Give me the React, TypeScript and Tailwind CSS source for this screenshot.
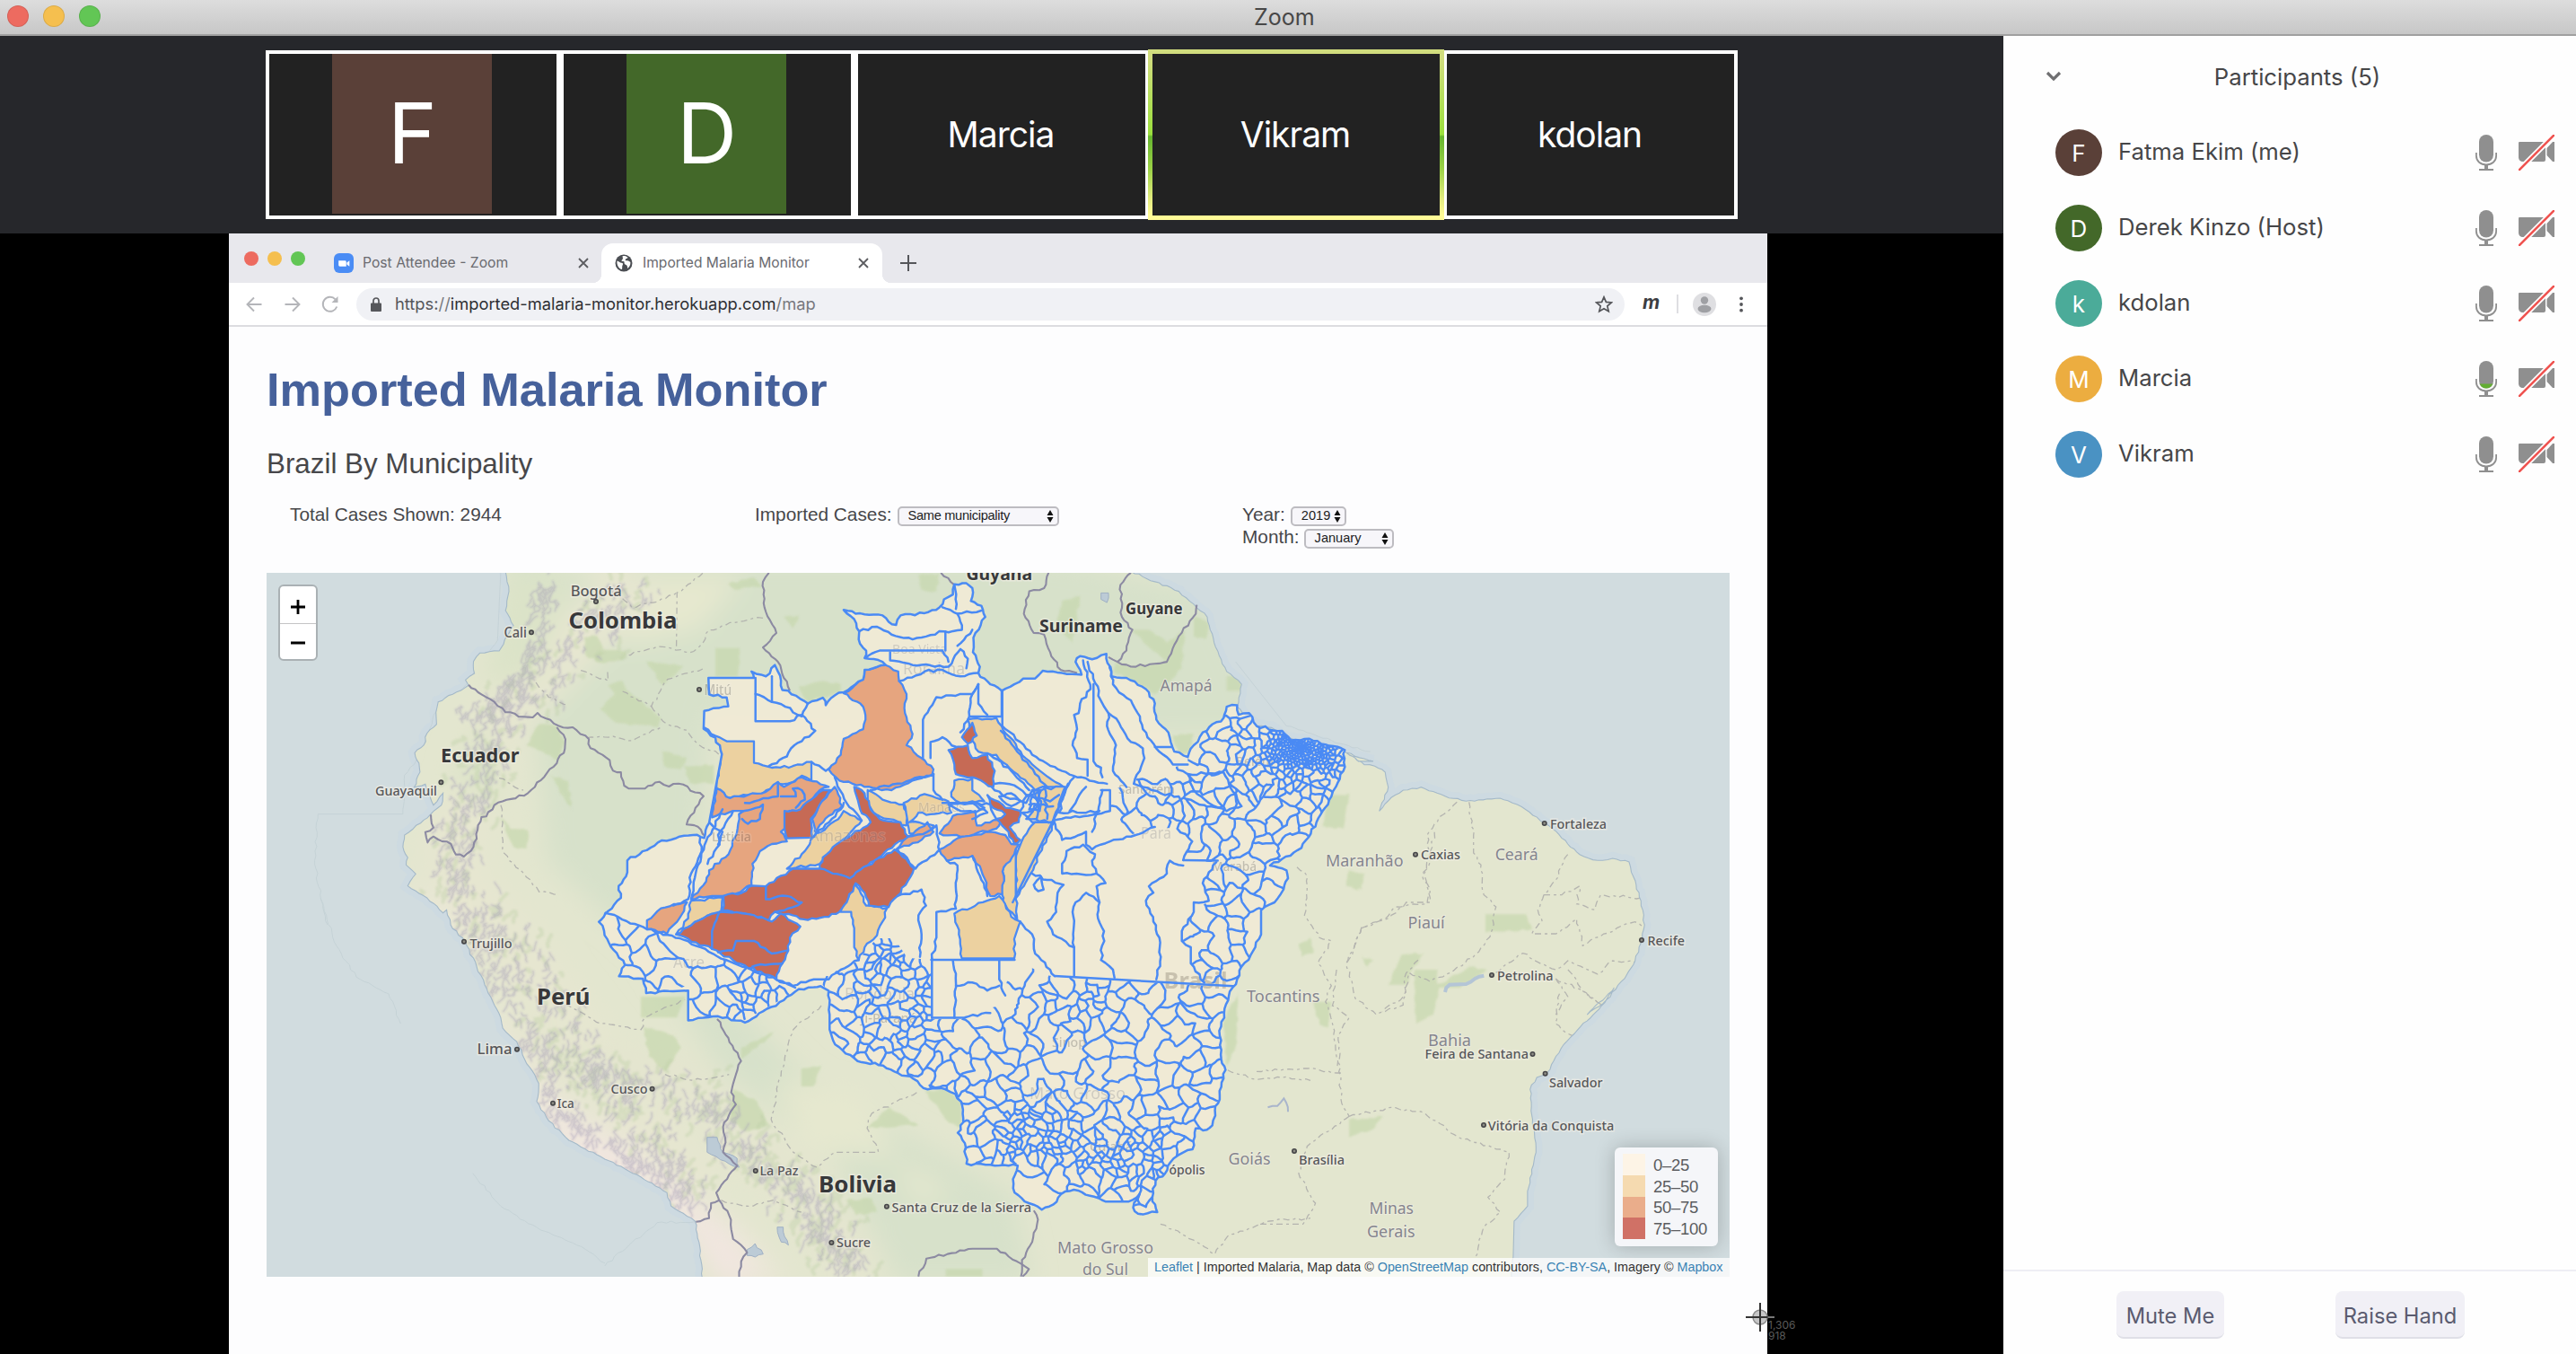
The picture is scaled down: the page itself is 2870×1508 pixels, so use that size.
import React from "react";

type Pt = [number, number];
type Sheet = { ox: number; oy: number; sx: number; sy: number };

/* ---------- map geometry ---------- */

// Survey sheets: every outline is stored in the coordinates of one sheet.
const NW: Sheet = { ox: 290, oy: 630, sx: 1 / 2.8, sy: 1 / 3 };
const AM: Sheet = { ox: 750, oy: 630, sx: 1 / 3, sy: 1 / 2.8 };
const PA: Sheet = { ox: 1100, oy: 630, sx: 1 / 3, sy: 1 / 2.8 };
const NE: Sheet = { ox: 1500, oy: 630, sx: 1 / 3, sy: 1 / 3 };
const SW: Sheet = { ox: 290, oy: 1000, sx: 1 / 2.24, sy: 1 / 3 };
const MT: Sheet = { ox: 900, oy: 1020, sx: 1 / 2.8, sy: 1 / 3 };
const SE: Sheet = { ox: 1400, oy: 1080, sx: 0.9375, sy: 1 / 3 };

const on = (s: Sheet, text: string): Pt[] =>
  text
    .trim()
    .split(/\s+/)
    .map((p) => {
      const [x, y] = p.split(",").map(Number);
      return [s.ox + x * s.sx, s.oy + y * s.sy] as Pt;
    });

function randomFrom(seed: number) {
  let a = seed;
  return () => {
    a = (a + 0x6d2b79f5) | 0;
    let t = Math.imul(a ^ (a >>> 15), 1 | a);
    t = (t + Math.imul(t ^ (t >>> 7), 61 | t)) ^ t;
    return ((t ^ (t >>> 14)) >>> 0) / 4294967296;
  };
}

const hash = (x: number, y: number) => {
  const v = Math.sin(x * 12.9898 + y * 78.233) * 43758.5453;
  return v - Math.floor(v) - 0.5;
};

// Breaks long segments into short ones with a small sideways shift.
function rough(points: Pt[], closed = false, step = 5, amp = 3): Pt[] {
  const src = closed ? [...points, points[0]] : points;
  const out: Pt[] = [src[0]];
  for (let i = 1; i < src.length; i++) {
    const [x0, y0] = src[i - 1];
    const [x1, y1] = src[i];
    const dx = x1 - x0;
    const dy = y1 - y0;
    const len = Math.hypot(dx, dy);
    const straight = Math.abs(dx) < 1 || Math.abs(dy) < 1 || len > 75;
    const n = straight ? 1 : Math.max(1, Math.round(len / step));
    const flip = x0 > x1 || (x0 === x1 && y0 > y1) ? -1 : 1;
    for (let k = 1; k < n; k++) {
      const px = x0 + (dx * k) / n;
      const py = y0 + (dy * k) / n;
      const h = hash(Math.round(px), Math.round(py)) * amp * flip;
      out.push([px - (dy / len) * h, py + (dx / len) * h]);
    }
    out.push([x1, y1]);
  }
  return out;
}

const toPath = (pts: Pt[], closed = false) =>
  "M" + pts.map(([x, y]) => `${x.toFixed(1)} ${y.toFixed(1)}`).join("L") + (closed ? "Z" : "");
const area = (s: Sheet, t: string) => toPath(rough(on(s, t), true), true);
const line = (s: Sheet, t: string) => toPath(rough(on(s, t)));

const coastWest: Pt[] = [
  ...on(NW, "765,20 775,70 765,150 790,200 745,285 685,292 665,320 668,360 640,382 650,400 600,430 555,455 548,490 550,530 520,560 510,600 482,625 495,660 498,690 480,740 515,730 540,800 570,760 565,800 530,832 500,860 450,900 445,940 460,975 455,1000 485,1030 460,1070 520,1110 570,1160"),
  ...on(SW, "465,40 475,90 510,145 540,230 560,290 600,400 605,435 640,480 660,540 695,620 690,680 720,745 770,810 850,865 940,925 1015,985 1025,1030 1085,1080 1095,1150 1103,1270"),
];
const coastEast: Pt[] = [
  ...on(SE, "303,1030 305,960 306,840 322,790 322,740 332,610 328,500 325,400 333,360 345,345 365,250 385,190 410,120 425,60"),
  ...on(NE, "805,1500 870,1450 930,1380 965,1320 985,1260 997,1200 985,1120 960,1040 945,990 890,978 840,985 780,965 740,930 690,880 660,860 600,815 540,785 500,778 400,787 330,770 250,740 190,750 150,775 110,820 140,740 130,690 95,670 60,665 0,625"),
  ...on(PA, "1290,610 1240,610 1195,580 1100,550 1000,540 950,505 900,500 870,480 835,440 850,370 800,330 775,280 745,200 735,160 690,120 640,80 560,50 480,18"),
];
const landPath = toPath(rough([...coastWest, ...coastEast], true, 5, 2), true);

const coveredOutline: Pt[] = [
  ...on(AM, "118,350 270,350 262,330 310,345 340,310 350,330 365,388 385,390 450,430 480,420 500,412 510,435 540,405 570,395 635,355 640,325 710,310 700,300 640,288 645,265 620,230 622,205 612,180 570,138 610,150 700,155 720,175 745,185 760,155 840,148 890,130 905,105 935,90 940,58 980,55 1000,70 995,110 1030,125 1043,160 1010,210 1002,270 1025,315 1020,335 1060,370 1098,390 1140,370 1170,352 1210,352 1235,328 1300,335 1365,340 1345,300 1360,282 1400,292 1448,275"),
  ...on(PA, "415,345 465,350 530,385 560,430 565,480 605,520 625,580 670,597 690,560 720,520 790,475 800,440 835,435 840,465 875,460 900,500 985,515 1015,545 1060,540 1130,558 1195,575 1190,640 1165,690 1150,720 1100,800 1050,880 985,915 945,935 1000,950 1005,975 990,1010 960,1050 915,1075 915,1150 880,1215 850,1250 835,1290"),
  ...on(MT, "1325,240 1300,310 1285,400 1290,480 1303,515 1285,600 1270,650 1262,700 1245,715 1210,710 1200,780 1155,800 1130,825 1115,860 1085,885 1075,940 1090,990 1030,995 1015,975 1035,930 1000,955 930,955 880,935 830,915 790,930 765,965 730,982 690,960 645,925 640,880 655,835 555,832 495,828 490,760 468,725 485,690 478,620 460,595 430,580 360,575 330,545 270,520 235,500 155,485 85,430 68,380 68,330 65,250 40,235"),
  ...on(AM, "470,1315 420,1320 370,1355 300,1390 240,1425 150,1405 100,1410 50,1418 50,1325"),
  ...on(SW, "1030,312 963,318 955,270 895,262 910,225 890,185 870,150 858,110 845,80 862,50"),
  ...on(NW, "1075,1165 1125,1110 1118,1070 1145,1025 1145,985 1240,925 1350,900 1385,910 1400,860 1440,630 1420,575 1383,545 1385,485 1460,470 1455,440 1400,430"),
];
const coveredPath = toPath(rough(coveredOutline, true), true);

const tan = [
  area(AM, "105,505 140,530 180,548 270,548 270,615 330,630 400,625 462,612 462,670 430,655 400,675 350,680 300,710 220,720 190,725 145,695 160,585"),
  area(AM, "650,700 700,730 770,745 785,780 780,810 720,790 670,770 650,730"),
  area(AM, "770,740 840,712 920,735 930,770 860,775 820,770 790,800 870,810 840,840 790,835"),
  area(AM, "60,1045 165,1035 160,1078 100,1100 10,1150 50,1100"),
  area(AM, "610,985 645,1060 715,1068 700,1110 670,1165 640,1190 620,1230 605,1190 605,1130 595,1080 560,1080"),
  area(AM, "570,765 630,795 560,860 490,930 380,945 440,890 460,855 470,845 560,780"),
  area(AM, "985,480 1080,475 1098,500 1150,570 1200,620 1240,650 1305,690 1250,690 1210,700 1150,650 1080,590 1020,580 1000,545"),
  area(AM, "940,670 1000,665 1000,700 1040,735 960,740 930,720"),
  area(AM, "1210,800 1275,800 1195,960 1140,1050 1150,980 1145,920 1165,860"),
  area(AM, "1105,940 1145,880 1145,1040 1150,1105 1100,1050"),
  area(AM, "940,1085 1090,1030 1130,1095 1160,1110 1145,1150 1140,1225 965,1225 955,1150"),
  area(AM, "1200,700 1310,690 1270,800 1180,790 1220,740"),
];
const orange = [
  area(AM, "145,695 190,725 250,715 310,705 350,675 370,690 430,660 465,672 520,690 490,700 460,740 420,765 375,770 372,820 360,830 380,860 330,868 290,890 265,930 262,995 235,1010 200,1030 130,1030 60,1040 110,985 120,950 185,900 215,820 220,775 235,765 200,765 130,785"),
  area(AM, "540,690 565,750 520,780 475,830 465,790 490,740 530,700"),
  area(AM, "570,398 635,355 640,325 710,310 752,330 755,360 780,400 775,460 800,525 780,560 830,600 870,635 865,655 800,670 730,700 680,695 640,690 600,680 555,670 520,635 560,590 570,540 600,525 635,510 643,480 635,440 600,420"),
  area(SW, "965,75 1000,35 1065,15 1040,80 1015,120 965,105"),
  area(AM, "890,885 950,850 1060,830 1110,840 1130,868 1155,870 1140,900 1105,940 1100,1025 1060,1030 1030,950 1000,905 940,912 915,920"),
  area(AM, "935,780 1010,765 1015,810 1100,790 1080,820 960,845 890,835"),
  area(AM, "785,845 850,800 870,830 830,855 745,885"),
];
const red = [
  area(AM, "372,765 425,760 460,730 500,700 525,700 490,745 460,790 465,848 380,850 372,820"),
  area(AM, "605,690 640,710 660,760 690,790 760,800 785,845 740,870 650,935 590,975 490,945 500,910 560,860 660,800 625,760"),
  area(AM, "740,885 770,900 805,945 750,1030 720,1065 655,1060 640,1020 610,990 580,1050 555,1080 520,1095 450,1105 400,1090 340,1080 320,1105 240,1085 165,1075 168,1030 230,1020 265,998 310,1000 400,945 490,945 590,975 650,935"),
  area(AM, "10,1150 100,1100 155,1080 240,1085 330,1110 360,1085 425,1125 390,1160 385,1200 365,1240 345,1290 200,1230 130,1195"),
  area(AM, "1000,490 1015,530 985,555 965,535"),
  area(AM, "920,575 985,560 1000,600 1050,590 1075,640 1070,690 1000,660 945,650 940,620"),
  area(AM, "1050,715 1110,755 1160,765 1155,800 1125,815 1160,855 1140,868 1110,820 1080,790 1110,775 1060,745"),
];

const municipalLines = [
  ...[
    "275,350 275,485 390,485 430,465 475,515 405,560 380,595 320,625",
    "275,400 330,425 375,440 430,470 450,430",
    "330,425 330,345",
    "462,612 510,640 525,630",
    "755,360 840,330 900,325 960,345 1020,335",
    "622,205 680,190 730,215 800,230 905,205 965,200 950,150 900,130",
    "640,290 690,265 900,265 920,300",
    "725,270 725,295 800,310 920,315 960,260 985,290 980,320",
    "910,205 910,265",
    "950,150 1030,140",
    "940,60 945,135",
    "950,250 1000,200",
    "835,600 835,480 880,410 930,405 1000,400 1020,370",
    "990,470 1098,470 1098,390",
    "1020,370 1000,400 990,470 960,520",
    "1020,370 1020,430 1050,465",
    "860,600 860,550 900,535 945,565",
    "540,660 580,740 630,795",
    "660,700 870,650",
    "870,650 870,700 900,730",
    "885,890 810,945 750,885",
    "785,845 850,830 880,810 890,890",
    "915,920 950,935 945,1070 880,1080 880,1160 865,1225",
    "750,1030 830,1010 845,1060 820,1090 830,1150 825,1220",
    "1000,905 1050,1030",
    "350,675 350,720 240,740",
    "360,720 410,720 400,695 430,700 440,730 410,755",
    "235,765 300,745 290,790 250,805 230,790",
    "130,1195 130,1140 155,1080",
    "150,1205 200,1200 210,1170 270,1170 330,1210 380,1200",
    "265,1250 365,1240",
    "310,1000 310,1040 380,1030 430,1050 400,1065 340,1080",
    "90,850 95,890 60,960 50,1040 0,1060",
    "165,760 110,860 75,960 60,1040",
    "200,765 150,840 155,870 115,930",
    "120,800 165,830 150,870",
    "470,845 530,790 560,760 570,740",
    "1065,690 1100,715 1180,740 1200,700",
    "1060,590 1130,640 1190,700",
    "1075,680 1140,685 1180,715",
    "900,740 960,740 1060,745 1080,790",
    "1000,740 1050,770 1000,790",
    "920,745 1000,735 1040,755 1010,770 960,765 920,745",
    "1090,720 1130,710 1160,735 1130,750 1090,720",
    "1160,765 1180,720 1230,700 1210,760 1170,770",
    "1165,770 1200,800 1270,800",
    "1185,715 1260,735 1290,715",
    "1220,700 1215,790",
    "1190,745 1270,750",
    "1240,690 1250,790",
    "1200,720 1230,735 1225,765 1190,760 1200,720",
    "865,1225 865,1410",
    "865,1410 960,1410 1060,1395",
    "935,1232 945,1300 940,1410",
    "1090,1232 1090,1290 1110,1340",
    "945,1310 1000,1300 1050,1325 1090,1310",
  ].map((t) => line(AM, t)),
  ...[
    "355,370 355,610 380,630 385,660",
    "320,295 345,385 310,430 305,460 290,465 300,510 285,560 300,600 335,605 335,655",
    "335,300 360,365 385,430 405,460 400,500 430,560 420,640 465,690",
    "405,460 440,490 480,550 520,570 525,600 490,680",
    "400,280 420,370 440,395 480,420 510,470 520,510 565,570 620,620 670,620",
    "560,566 622,566",
    "50,390 50,500",
    "50,500 110,550 150,590 250,640 300,660 400,680",
    "45,515 100,580 160,650 200,690",
    "270,680 220,795",
    "220,795 85,1050",
    "220,795 410,765 410,700 380,700",
    "290,660 260,700 240,770 375,765",
    "330,690 275,765",
    "220,795 250,855 330,830 330,870 350,885 410,860 480,845 560,815",
    "385,700 350,830",
    "265,890 320,870 360,900 350,920 365,960 330,965 250,960 250,930 265,890",
    "150,960 200,980 255,995 235,1020 230,1080 200,1110 220,1150 290,1190",
    "180,970 188,1010 170,1015 155,995 180,970",
    "290,1280 290,1190 285,1080 295,1050 330,1020 375,1050 370,1100 390,1140 380,1230 420,1260 425,1285",
    "365,960 395,990 365,1000 375,1050",
    "655,935 610,920 600,960 540,1000 555,1020 530,1045 555,1110 575,1160 580,1220 565,1290",
    "110,1110 150,1150 160,1210 210,1260 225,1280",
    "225,1280 835,1312",
    "655,918 770,920",
    "725,1300 680,1240 680,1190 650,1170 650,1140 690,1080 690,1050 740,1045 720,990 765,925",
    "655,918 685,860 635,820 660,780 640,720 580,710 520,690 490,680",
    "670,650 790,645 850,750 800,765 740,740 690,700 670,650",
  ].map((t) => line(PA, t)),
];

/* Small municipalities: Voronoi cells over scattered seats, some joined in pairs,
   bent by a smooth warp and clipped to a region. */

function inside([x, y]: Pt, poly: Pt[]) {
  let hit = false;
  for (let i = 0, j = poly.length - 1; i < poly.length; j = i++) {
    const [xi, yi] = poly[i];
    const [xj, yj] = poly[j];
    if (yi > y !== yj > y && x < ((xj - xi) * (y - yi)) / (yj - yi) + xi) hit = !hit;
  }
  return hit;
}

type Seat = { x: number; y: number; r: number; group: number };
type Corner = { p: Pt; edge: number };

function mesh(region: Pt[], spacing: (x: number, y: number) => number, tries: number, seed: number, core?: [number, number, number, number]) {
  const rnd = randomFrom(seed);
  const xs = region.map((p) => p[0]);
  const ys = region.map((p) => p[1]);
  const [x0, x1, y0, y1] = [Math.min(...xs) - 8, Math.max(...xs) + 8, Math.min(...ys) - 8, Math.max(...ys) + 8];
  const seats: Seat[] = [];
  const place = (x: number, y: number) => {
    if (!inside([x, y], region)) return;
    const r = spacing(x, y) * (0.4 + rnd() * 0.9);
    if (seats.every((s) => Math.hypot(s.x - x, s.y - y) > Math.min(r, s.r))) {
      seats.push({ x, y, r, group: seats.length });
    }
  };
  if (core) {
    const [cx, cy, rx, count] = core;
    for (let i = 0; i < count; i++) {
      place(cx + (rnd() + rnd() - 1) * rx, cy + (rnd() + rnd() - 1) * rx * 0.5);
    }
  }
  for (let i = 0; i < tries; i++) place(x0 + rnd() * (x1 - x0), y0 + rnd() * (y1 - y0));
  for (const s of seats) {
    if (rnd() > 0.45) continue;
    let best = s;
    let dist = 1e9;
    for (const o of seats) {
      const d = Math.hypot(o.x - s.x, o.y - s.y);
      if (o !== s && d < dist) [best, dist] = [o, d];
    }
    if (dist > 6) s.group = best.group;
  }
  const bend = ([x, y]: Pt): Pt => {
    const k = Math.min(1, spacing(x, y) / 18);
    return [
      x + k * (3 * Math.sin(y / 7.3 + x / 17) + 1.7 * Math.sin(y / 2.9 - x / 9)),
      y + k * (3 * Math.sin(x / 7.9 - y / 13) + 1.7 * Math.sin(x / 3.3 + y / 8)),
    ];
  };
  let d = "";
  seats.forEach((s, si) => {
    let cell: Corner[] = [
      { p: [s.x - 80, s.y - 80], edge: -1 },
      { p: [s.x + 80, s.y - 80], edge: -1 },
      { p: [s.x + 80, s.y + 80], edge: -1 },
      { p: [s.x - 80, s.y + 80], edge: -1 },
    ];
    seats.forEach((o, oi) => {
      if (oi === si || Math.abs(o.x - s.x) > 110 || Math.abs(o.y - s.y) > 110) return;
      const nx = o.x - s.x;
      const ny = o.y - s.y;
      const c = (nx * (o.x + s.x) + ny * (o.y + s.y)) / 2;
      const next: Corner[] = [];
      for (let i = 0; i < cell.length; i++) {
        const a = cell[i];
        const b = cell[(i + 1) % cell.length];
        const da = a.p[0] * nx + a.p[1] * ny - c;
        const db = b.p[0] * nx + b.p[1] * ny - c;
        if (da <= 0) next.push(a);
        if (da <= 0 !== db <= 0) {
          const t = da / (da - db);
          const p: Pt = [a.p[0] + (b.p[0] - a.p[0]) * t, a.p[1] + (b.p[1] - a.p[1]) * t];
          next.push({ p, edge: da <= 0 ? oi : a.edge });
        }
      }
      cell = next;
    });
    cell.forEach((a, i) => {
      if (a.edge < si || seats[a.edge].group === s.group) return;
      const b = cell[(i + 1) % cell.length];
      const len = Math.hypot(b.p[0] - a.p[0], b.p[1] - a.p[1]);
      const n = Math.max(1, Math.round(len / 4));
      const pts: Pt[] = [];
      for (let k = 0; k <= n; k++) {
        pts.push(bend([a.p[0] + ((b.p[0] - a.p[0]) * k) / n, a.p[1] + ((b.p[1] - a.p[1]) * k) / n]));
      }
      d += toPath(pts);
    });
  });
  return d;
}

const southRegion: Pt[] = [
  ...on(MT, "215,75 270,75 310,140 385,147 385,345 480,345 500,325 600,300 640,147 755,200 1325,240"),
  ...on(MT, "1300,310 1285,400 1290,480 1303,515 1285,600 1270,650 1262,700 1245,715 1210,710 1200,780 1155,800 1130,825 1115,860 1085,885 1075,940 1090,990 1030,995 1015,975 1035,930 1000,955 930,955 880,935 830,915 790,930 765,965 730,982 690,960 645,925 640,880 655,835 555,832 495,828 490,760 468,725 485,690 478,620 460,595 430,580 360,575 330,545 270,520 235,500 155,485 85,430 68,380 68,330 65,250 20,205 70,200 110,165 150,155"),
];
const eastRegion = on(
  PA,
  "490,680 530,610 560,640 640,625 670,620 670,597 690,560 720,520 790,475 800,440 835,435 840,465 875,460 900,500 985,515 1015,545 1060,540 1130,558 1195,575 1190,640 1165,690 1150,720 1100,800 1050,880 985,915 945,935 1000,950 1005,975 990,1010 960,1050 915,1075 915,1150 880,1215 850,1250 835,1312 725,1300 680,1240 680,1190 650,1170 650,1140 690,1080 740,1045 720,990 765,925 655,918 685,860 635,820 560,815 410,860 410,700",
);
const acreRegion = on(
  SW,
  "862,50 965,105 1068,145 1140,195 1290,275 1335,300 1420,300 1335,310 1300,340 1200,415 1068,410 1068,290 1030,312 963,318 955,270 895,262 910,225 890,185 870,150 858,110 845,80",
);

const southMesh = mesh(
  southRegion,
  (x, y) => {
    const cx = (x - 900) * 2.8;
    const cy = (y - 1020) * 3;
    if (cx < 480) return cy < 460 && cx > 190 && cx < 400 ? 10 : 20;
    if (cy > 640 && cy < 810 && cx > 600 && cx < 860) return 8;
    if (cy > 700 && cy < 880 && cx > 820 && cx < 1120) return 9;
    if (cy > 800 && cx < 920) return 40;
    if (cy > 640) return 18;
    if (cy < 370 && cx > 740 && cx < 960) return 14;
    return 28;
  },
  7000,
  11,
);
const eastMesh = mesh(
  eastRegion,
  (x, y) => {
    const d = Math.hypot(x - 1450, (y - 834) * 1.7);
    return d < 32 ? 4.5 : Math.min(26, 5 + (d - 32) * 0.2);
  },
  7000,
  5,
  [1450, 834, 45, 1500],
);
const acreMesh = mesh(acreRegion, (x) => (x > 820 ? 10 : 29), 1500, 3);

/* ---------- terrain ---------- */

const ridge: Pt[] = [
  ...on(NW, "1180,25 1080,150 960,280 860,390 790,460 730,540 700,650 670,760 620,860 600,960 640,1080 700,1180"),
  ...on(SW, "620,130 680,260 760,400 830,520 900,640 960,760 1020,880 1100,980"),
];
const ridge2: Pt[] = on(NW, "900,30 890,130 860,260 800,380 730,480 640,500");
const ridge3: Pt[] = [...on(SW, "660,420 760,560 960,600 1120,670 1200,820 1300,930 1380,1000"), ...on(MT, "20,1000 100,1100 180,1200")];
const ridge4: Pt[] = on(SW, "500,60 560,200 620,350 700,560 760,720 880,830 1000,920 1060,1010");

function hills(path: Pt[], spread: number, count: number, seed: number) {
  const rnd = randomFrom(seed);
  let d = "";
  for (let i = 0; i < count; i++) {
    const k = rnd() * (path.length - 1);
    const j = Math.floor(k);
    const f = k - j;
    const a = path[j];
    const b = path[j + 1];
    const x = a[0] + (b[0] - a[0]) * f + (rnd() + rnd() - 1) * spread;
    const y = a[1] + (b[1] - a[1]) * f + (rnd() + rnd() - 1) * spread;
    d += `M${x.toFixed(1)} ${y.toFixed(1)}l${(rnd() * 8 - 5).toFixed(1)} ${(rnd() * 5).toFixed(1)}l${(rnd() * 8 - 4).toFixed(1)} ${(rnd() * 6).toFixed(1)}l${(rnd() * 8 - 5).toFixed(1)} ${(rnd() * 5).toFixed(1)}`;
  }
  return d;
}
const hillPaths = [hills(ridge, 32, 560, 1), hills(ridge2, 18, 130, 2), hills(ridge3, 30, 320, 8), hills(ridge4, 20, 240, 9)];
const greenPaths = [hills(ridge, 44, 220, 21), hills(ridge3, 44, 180, 22)];

const parks = [
  area(NW, "1010,240 1050,235 1070,280 1140,290 1130,315 1060,325 1015,300"),
  area(NW, "1205,320 1320,335 1255,400"),
  area(NW, "1420,275 1495,275 1490,370 1420,370"),
  area(NW, "1060,480 1110,420 1150,420 1250,510 1240,540 1110,525"),
  area(NW, "1085,400 1130,385 1155,430 1110,440"),
  area(NW, "870,530 930,540 950,590 930,650 880,620 830,600"),
  area(NW, "905,700 960,720 975,820 945,770"),
  area(NW, "1255,620 1330,640 1310,680 1260,670"),
  area(NW, "1320,670 1415,665 1415,730 1340,725"),
  area(NW, "1460,60 1540,40 1568,70 1480,80"),
  area(NW, "750,840 780,880 835,885 830,945 790,940"),
  area(AM, "370,160 420,155 400,195"),
  area(AM, "420,375 500,360 560,370 560,395 450,425"),
  area(AM, "820,30 890,25 880,80 830,75"),
  area(PA, "250,110 310,95 285,240 230,190"),
  area(PA, "480,200 540,200 600,240 660,200 650,320 560,400 420,330 430,300 480,315 570,305 600,300"),
  area(PA, "690,160 740,180 730,230 690,220"),
  area(PA, "800,345 850,345 850,390 800,390"),
  area(PA, "620,530 690,525 680,580 640,585"),
  area(PA, "1140,720 1210,710 1190,820 1120,810"),
  area(PA, "840,1330 830,1500 800,1560 790,1420"),
  area(PA, "1090,1360 1150,1360 1140,1440 1110,1430"),
  area(PA, "1040,1180 1080,1160 1090,1210 1050,1220"),
  area(PA, "1210,950 1260,960 1250,1010 1200,990"),
  area(NE, "465,1165 600,1165 620,1215 465,1225"),
  area(NE, "185,1300 260,1295 220,1350 200,1400 140,1400"),
  area(NE, "410,1340 470,1350 380,1410 310,1410 290,1500 230,1500 230,1410 320,1395"),
  area(NE, "50,1305 90,1320 70,1340"),
  area(NE, "0,1050 40,1050 40,1085 0,1070"),
  area(SE, "110,500 150,490 140,530 110,560"),
  area(SE, "188,0 215,0 210,150 190,180"),
  area(SW, "950,330 1060,330 1040,400 950,400"),
  area(SW, "955,430 1030,460 1050,500 1010,580 970,530"),
  area(SW, "1200,500 1290,440 1240,500 1200,540"),
  area(SW, "1180,640 1240,680 1270,760 1210,780 1170,740"),
  area(SW, "1350,570 1400,560 1380,630 1350,630"),
  area(MT, "255,640 345,700 185,710"),
  area(MT, "365,585 430,580 480,620 480,710 430,680"),
  area(MT, "430,1180 545,1180 545,1205 430,1205"),
  area(MT, "120,950 200,945 215,990 150,1000"),
];

const countryBorders = [
  line(NW, "650,398 690,430 730,455 765,490 820,505 850,507 865,492 890,510 930,535 975,540 1025,580 1030,610 1090,650 1100,685 1125,690 1135,735 1150,745 1200,745 1245,722 1275,738 1305,728 1383,770 1330,865 1365,872 1390,905"),
  line(NW, "925,540 952,580 950,612 925,660 835,760 730,800 705,838 690,840 665,940 635,972 610,965 595,930 555,915 540,905 522,925 515,890 540,875 532,832"),
  line(AM, "320,22 300,50 305,130 345,210 300,255 350,300 370,350 390,390"),
  line(AM, "895,22 940,60"),
  line(PA, "205,22 190,70 140,80 122,150 155,210 190,215 210,270 245,325 300,335"),
  line(PA, "480,22 445,60 450,160 485,200 465,265 435,300 480,315 575,305 600,300 640,220 697,150 700,122"),
  line(PA, "435,300 405,285"),
  line(SW, "1140,405 1200,545 1187,590 1175,650 1187,690 1155,765 1160,800 1155,850 1190,895 1170,925 1138,985 1145,1010 1125,1020 1120,1070 1087,1082"),
  line(SW, "1145,1010 1170,1060 1180,1140 1215,1185 1200,1215 1195,1266"),
  line(MT, "345,1205 370,1145 515,1112 590,1112 665,1162 690,1180 670,1205"),
  line(MT, "705,985 718,1015 700,1090 668,1150 665,1205"),
];

const stateBorders = [
  line(NW, "1380,25 1300,90 1298,270"),
  line(NW, "1130,110 1160,140 1240,120 1300,90"),
  line(NW, "1568,175 1480,190 1400,215 1370,270 1340,290 1240,270 1140,300"),
  line(NW, "860,390 900,440 960,465"),
  line(NW, "1000,350 1085,385 1083,350"),
  line(NW, "1130,420 1220,470 1270,380 1380,345"),
  line(NW, "1220,470 1270,530 1330,550 1370,600 1430,630"),
  line(NW, "1020,575 1100,570 1160,585 1250,540"),
  line(NW, "745,710 820,750"),
  line(NW, "750,800 760,960 830,1040 870,1090 930,1100"),
  line(NE, "370,790 310,840 270,900 280,980 255,1040 280,1090 270,1130 165,1140 130,1180 50,1210 20,1300 0,1330"),
  line(NE, "410,790 425,900 425,960 450,1000 460,1100 500,1140 480,1240 430,1300 350,1360 280,1390 210,1360 190,1440 120,1490"),
  line(NE, "740,965 700,1050 660,1100 640,1150 655,1190 620,1230 700,1230 770,1180 790,1270 860,1230 965,1190 990,1205"),
  line(NE, "660,1100 720,1100 780,1070 770,1130 830,1150 850,1100 985,1110"),
  line(NE, "500,1360 590,1295 650,1330 700,1350 740,1320 840,1365 890,1320 965,1325"),
  line(NE, "700,1380 740,1440 700,1500"),
  line(NE, "700,1380 790,1420 850,1465"),
  line(PA, "1035,940 1070,970 1060,1090 1110,1160 1150,1170 1105,1240 1150,1310 1130,1360 1160,1450 1170,1560"),
  line(PA, "1250,1130 1340,1100 1400,1050 1480,1050 1460,960 1500,820"),
  line(PA, "1250,1130 1200,1240 1230,1350 1300,1400 1390,1370 1400,1270 1440,1230"),
  line(SE, "95,0 90,120 110,160 97,220 100,430 110,490"),
  line(SE, "110,490 160,460 200,480 240,560 300,610 295,700 275,760 290,810 270,860 260,960"),
  line(SE, "0,340 60,330 100,345"),
  line(SE, "110,490 60,590 50,680 70,780 55,850 0,850"),
  line(SE, "370,0 385,60 410,120"),
  line(SE, "360,80 355,180 375,220"),
  line(MT, "1310,515 1390,545 1480,540 1568,550"),
  line(MT, "1100,1030 1180,1070 1270,1130 1310,1070 1440,1020 1568,1010"),
  line(MT, "340,590 200,660 185,710 220,790 85,790 30,840"),
  line(SW, "1400,360 1330,440 1300,580 1275,740 1330,850 1390,900"),
  line(SW, "730,330 850,420 950,440 960,400 1060,340"),
  line(SW, "1010,590 1080,610 1170,590"),
  line(SW, "1150,1010 1220,1030 1280,1010 1350,1050"),
];

const seaLines = [
  line(NW, "750,23 740,250 640,400 540,500 500,640 450,700 445,830 180,830"),
  line(NW, "180,830 170,1000 210,1200"),
  line(SW, "150,0 190,160 240,265 320,320 350,420"),
  line(SW, "530,920 600,1030 700,1110 790,1160 860,1220"),
  line(SW, "860,1230 920,1160 990,1085 1085,1082"),
  line(PA, "830,300 1000,500 1150,545 1280,580"),
];

const lakes = [
  area(SW, "1115,800 1140,800 1155,850 1190,870 1195,900 1160,880 1115,850"),
  area(SW, "1215,1175 1235,1155 1255,1190 1235,1200 1215,1195"),
  area(SW, "1290,1100 1305,1100 1318,1160 1300,1150"),
  area(PA, "380,85 405,85 400,115 380,105"),
];

type Label = { t: string; x: number; y: number; w: number; s: number; kind: "country" | "state" | "city" | "big"; dot?: Pt };
const labels: Label[] = [
  { t: "Bogotá", x: 635.7, y: 664, w: 57, s: 16.5, kind: "city", dot: [664, 670] },
  { t: "Colombia", x: 633.5, y: 700, w: 121, s: 25, kind: "country" },
  { t: "Cali", x: 561.5, y: 710, w: 25.5, s: 15.5, kind: "city", dot: [592, 704.3] },
  { t: "Ecuador", x: 491, y: 849, w: 87.5, s: 22, kind: "country" },
  { t: "Guayaquil", x: 418, y: 886, w: 69, s: 15, kind: "city", dot: [491.4, 871.3] },
  { t: "Guyana", x: 1076.5, y: 646, w: 73.5, s: 19, kind: "country" },
  { t: "Suriname", x: 1158, y: 703.5, w: 93, s: 19.5, kind: "country" },
  { t: "Guyane", x: 1254, y: 683.5, w: 63.5, s: 17.5, kind: "country" },
  { t: "Amapá", x: 1292.5, y: 770, w: 58, s: 18.5, kind: "state" },
  { t: "Perú", x: 598, y: 1119, w: 59.5, s: 25, kind: "country" },
  { t: "Trujillo", x: 523.5, y: 1055.5, w: 47, s: 15, kind: "city", dot: [517, 1048.7] },
  { t: "Lima", x: 531.5, y: 1173.5, w: 39, s: 17, kind: "city", dot: [576, 1168.7] },
  { t: "Cusco", x: 680.5, y: 1217.5, w: 41, s: 15, kind: "city", dot: [726.6, 1212.7] },
  { t: "Ica", x: 620.8, y: 1233.5, w: 19, s: 15, kind: "city", dot: [616, 1228.7] },
  { t: "La Paz", x: 846.5, y: 1309, w: 43, s: 15, kind: "city", dot: [841.8, 1304] },
  { t: "Bolivia", x: 912, y: 1328, w: 87, s: 25, kind: "country" },
  { t: "Santa Cruz de la Sierra", x: 993.6, y: 1349.5, w: 155.5, s: 15, kind: "city", dot: [987.9, 1343.7] },
  { t: "Sucre", x: 932, y: 1388.5, w: 38, s: 15, kind: "city", dot: [926.4, 1384] },
  { t: "Mato Grosso", x: 1178, y: 1396, w: 107, s: 18, kind: "state" },
  { t: "do Sul", x: 1206, y: 1420, w: 51, s: 18, kind: "state" },
  { t: "Goiás", x: 1368.5, y: 1296.5, w: 47, s: 18, kind: "state" },
  { t: "Brasília", x: 1447, y: 1297, w: 51, s: 15, kind: "city", dot: [1442, 1282] },
  { t: "ópolis", x: 1302.5, y: 1308, w: 40, s: 15, kind: "city" },
  { t: "Tocantins", x: 1389, y: 1116, w: 81.5, s: 18, kind: "state" },
  { t: "Maranhão", x: 1477, y: 965, w: 86.5, s: 18, kind: "state" },
  { t: "Caxias", x: 1583, y: 956.7, w: 44, s: 14.5, kind: "city", dot: [1577, 951.7] },
  { t: "Ceará", x: 1665.7, y: 957.7, w: 48, s: 18, kind: "state" },
  { t: "Fortaleza", x: 1727, y: 922.7, w: 63, s: 14.5, kind: "city", dot: [1720.7, 917] },
  { t: "Piauí", x: 1568.5, y: 1034, w: 41, s: 18, kind: "state" },
  { t: "Recife", x: 1835.5, y: 1052.6, w: 41.5, s: 14.5, kind: "city", dot: [1829, 1047] },
  { t: "Petrolina", x: 1668, y: 1092, w: 62.5, s: 14.5, kind: "city", dot: [1662, 1086] },
  { t: "Bahia", x: 1591, y: 1164.5, w: 48, s: 18, kind: "state" },
  { t: "Feira de Santana", x: 1587.5, y: 1179, w: 115.5, s: 14.5, kind: "city", dot: [1707.5, 1174] },
  { t: "Salvador", x: 1726, y: 1210.7, w: 59.5, s: 14.5, kind: "city", dot: [1721.6, 1195.7] },
  { t: "Vitória da Conquista", x: 1657.8, y: 1258.7, w: 140.5, s: 14.5, kind: "city", dot: [1653, 1253] },
  { t: "Minas", x: 1525.5, y: 1352.3, w: 49.5, s: 18, kind: "state" },
  { t: "Gerais", x: 1523, y: 1377.7, w: 53.5, s: 18, kind: "state" },
];
const fadedLabels: Label[] = [
  { t: "Mitú", x: 784.6, y: 774, w: 30.5, s: 15.5, kind: "city" },
  { t: "Leticia", x: 793, y: 937, w: 44, s: 14.5, kind: "city" },
  { t: "Boa Vista", x: 994, y: 728, w: 61, s: 15, kind: "state" },
  { t: "Roraima", x: 1006, y: 751, w: 69, s: 18, kind: "state" },
  { t: "Manaus", x: 1023, y: 904, w: 52, s: 15, kind: "state" },
  { t: "Amazonas", x: 901.5, y: 937, w: 85, s: 18, kind: "state" },
  { t: "Santarém", x: 1246, y: 884, w: 63, s: 14.5, kind: "city" },
  { t: "Pará", x: 1271, y: 933.5, w: 34, s: 18, kind: "state" },
  { t: "Marabá", x: 1350, y: 970, w: 50, s: 14.5, kind: "city" },
  { t: "Belém", x: 1377, y: 853, w: 42, s: 14.5, kind: "city" },
  { t: "Brasil", x: 1296.5, y: 1101, w: 71, s: 25, kind: "big" },
  { t: "Acre", x: 750, y: 1078, w: 35, s: 18, kind: "state" },
  { t: "Rondônia", x: 941, y: 1113, w: 78, s: 18, kind: "state" },
  { t: "Ji-Paraná", x: 959, y: 1139, w: 62, s: 14.5, kind: "city" },
  { t: "Sinop", x: 1172, y: 1166, w: 38, s: 14.5, kind: "city" },
  { t: "Mato Grosso", x: 1147, y: 1224, w: 107, s: 18, kind: "state" },
  { t: "Cuiabá", x: 1214, y: 1282, w: 48, s: 14.5, kind: "city" },
];

const labelLook = {
  country: "fill-[#37383a] font-bold [stroke-width:3px]",
  big: "fill-[#6d6455] font-bold [stroke-width:0px]",
  state: "fill-[#85858e] font-normal [stroke-width:2px]",
  city: "fill-[#57575a] font-medium [stroke-width:3px]",
};

function MapLabel({ l }: { l: Label }) {
  return (
    <g>
      <text
        x={l.x}
        y={l.y}
        textLength={l.w}
        lengthAdjust="spacingAndGlyphs"
        fontSize={l.s}
        className={`${labelLook[l.kind]} stroke-[#f2efe6]/60 [paint-order:stroke]`}
      >
        {l.t}
      </text>
      {l.dot && <circle cx={l.dot[0]} cy={l.dot[1]} r={2.2} fill="#8d8d85" stroke="#454548" strokeWidth={1.6} />}
    </g>
  );
}

function MapDrawing() {
  return (
    <svg viewBox="297 638 1630 784" className="block h-full w-full font-['Noto_Sans',sans-serif]" aria-hidden="true">
      <defs>
        <clipPath id="land"><path d={landPath} /></clipPath>
        <clipPath id="covered"><path d={coveredPath} /></clipPath>
        <clipPath id="south"><path d={toPath(southRegion, true)} /></clipPath>
        <clipPath id="east"><path d={toPath(eastRegion, true)} /></clipPath>
        <clipPath id="acre"><path d={toPath(acreRegion, true)} /></clipPath>
        <filter id="haze" x="-30%" y="-30%" width="160%" height="160%"><feGaussianBlur stdDeviation="14" /></filter>
        <filter id="relief" x="-30%" y="-30%" width="160%" height="160%"><feGaussianBlur stdDeviation="1.1" /></filter>
      </defs>
      <rect x="297" y="638" width="1630" height="784" fill="#d1dcdf" />
      <path d={landPath} fill="none" stroke="#cad9e2" strokeWidth="14" opacity="0.6" />
      <g fill="none" stroke="#c2d0d4" strokeWidth="1" opacity="0.8">
        {seaLines.map((d, i) => <path key={i} d={d} />)}
      </g>
      <path d={landPath} fill="#e3e6cf" />
      <g clipPath="url(#land)">
        <g filter="url(#haze)">
          <path d="M560 600L800 700 780 950 830 1130 900 1200 1130 1330 1150 1430 1000 1430 930 1290 800 1190 720 1060 610 960 600 840Z" fill="#d7e1ca" />
          <path d="M700 620L1180 620 1350 660 1420 820 1300 820 800 800Z" fill="#d7e1ca" />
          <path d="M690 640L830 640 780 700 700 720Z" fill="#e6e8cf" />
          <path d={toPath(ridge)} fill="none" stroke="#e6e6d0" strokeWidth="64" />
          <path d={toPath(ridge3)} fill="none" stroke="#e4e5cf" strokeWidth="64" />
          <path d="M450 980L500 1010 560 1190 620 1290 760 1370 800 1430 880 1430 830 1370 700 1270 610 1210Z" fill="#ece7d9" />
          <path d="M560 1215L640 1290 770 1370 800 1430 850 1430 810 1370 690 1280Z" fill="#f1e6e0" />
          <path d="M1000 1290L1060 1330 1020 1340Z M860 1200L960 1220 1000 1290 900 1280Z" fill="#e6e8cf" />
          <path d="M560 640L640 640 600 750 540 770Z M540 790L560 900 500 870Z" fill="#dbe3c8" />
        </g>
        <g fill="#c7d8ae" opacity="0.7" filter="url(#relief)">
          {parks.map((d, i) => <path key={i} d={d} />)}
        </g>
        <g fill="none" stroke="#b9cda3" strokeWidth="4" opacity="0.34" strokeLinecap="round" filter="url(#relief)">
          {greenPaths.map((d, i) => <path key={i} d={d} />)}
        </g>
        <g fill="none" stroke="#a79fbd" strokeWidth="2.2" opacity="0.36" strokeLinecap="round" strokeLinejoin="round" filter="url(#relief)">
          {hillPaths.map((d, i) => <path key={i} d={d} />)}
        </g>
        <g fill="none" stroke="#9c98a8" strokeWidth="0.9" opacity="0.12">
          {hillPaths.map((d, i) => <path key={i} d={d} />)}
        </g>
        <g fill="none" stroke="#a9a8a8" strokeWidth="1.3" strokeDasharray="7 4 3 4" opacity="0.8">
          {stateBorders.map((d, i) => <path key={i} d={d} />)}
        </g>
        <g fill="#bccbd6" stroke="#9fb0c4" strokeWidth="1">
          {lakes.map((d, i) => <path key={i} d={d} />)}
        </g>
        <path d={line(NE, "330,1425 345,1400 400,1398 430,1380 460,1370")} fill="none" stroke="#b4c5d6" strokeWidth="4" />
        <path d={line(MT, "1435,640 1465,635 1485,610 1498,655")} fill="none" stroke="#a9b5cc" strokeWidth="2" />
      </g>
      <path d={landPath} fill="none" stroke="#a4b9c9" strokeWidth="1.1" />
      <g fill="none" stroke="#8c8aa2" strokeWidth="2.1" strokeLinejoin="round">
        {countryBorders.map((d, i) => <path key={i} d={d} />)}
      </g>
      <circle cx="779" cy="768" r="2.2" fill="#8d8d85" stroke="#454548" strokeWidth="1.6" />
      {labels.map((l) => <MapLabel key={l.t} l={l} />)}

      <path d={coveredPath} fill="#f1ead6" fillOpacity="0.92" />
      <g clipPath="url(#covered)" stroke="#4a8af4" strokeWidth="2.3" strokeLinejoin="round">
        <g fill="#ecd1a0">{tan.map((d, i) => <path key={i} d={d} />)}</g>
        <g fill="#e6a57f">{orange.map((d, i) => <path key={i} d={d} />)}</g>
        <g fill="#c66a55">{red.map((d, i) => <path key={i} d={d} />)}</g>
      </g>
      <g opacity="0.3">{fadedLabels.map((l) => <MapLabel key={l.t + l.x} l={l} />)}</g>
      <g fill="none" stroke="#4a8af4" strokeWidth="2.5" strokeLinejoin="round" strokeLinecap="round">
        <g clipPath="url(#covered)">
          {municipalLines.map((d, i) => <path key={i} d={d} />)}
          <g clipPath="url(#south)"><path d={southMesh} /></g>
          <g clipPath="url(#east)"><path d={eastMesh} /></g>
          <g clipPath="url(#acre)"><path d={acreMesh} /></g>
        </g>
        <path d={line(MT, "385,147 645,147") + line(SW, "862,50 965,105") + line(SW, "965,105 1068,145 1140,195 1290,275 1335,300") + line(AM, "345,1290 400,1310 470,1290 520,1290 560,1260 620,1230")} />
        <path d={coveredPath} />
      </g>
    </svg>
  );
}

/* ---------- small pieces ---------- */

function MicIcon({ active = false }: { active?: boolean }) {
  return (
    <svg viewBox="0 0 24 40" className="h-10 w-6">
      <rect x="4" y="0" width="16" height="30.5" rx="8" fill="#8f8f8f" />
      {active && <path d="M4.6 25.5h14.8c-1.2 3-4 5-7.4 5s-6.200-2-7.400-5z" fill="#62ad32" />}
      <path d="M.9 20v3.500c0 6 4.800 9.900 11.100 9.900s11.100-3.900 11.100-9.900V20" fill="none" stroke="#8f8f8f" strokeWidth="1.8" />
      <path d="M10 33h4v5h6v2H4v-2h6z" fill="#8f8f8f" />
    </svg>
  );
}

function CameraOffIcon() {
  return (
    <svg viewBox="0 0 40 40" className="h-10 w-10">
      <path d="M1 8h27a2 2 0 0 1 2 2v18a2 2 0 0 1-2 2H5c-3 0-5-2-5-5V9a1 1 0 0 1 1-1zM40 8v22h-2l-6.500-7v-8L38 8z" fill="#8f8f8f" />
      <path d="M0 40L40 0" stroke="#fff" strokeWidth="6" />
      <path d="M.8 39.200L39.200.8" stroke="#ef5350" strokeWidth="2.600" strokeLinecap="round" />
    </svg>
  );
}

function Select({ value, className }: { value: string; className: string }) {
  return (
    <span className={`flex h-[22px] items-center justify-between rounded-[5px] border-2 border-[#bdbcc1] bg-[#f7f6fa] pr-1 pl-[10px] text-[14.600px] leading-none text-[#1c1c1e] ${className}`}>
      <span className="whitespace-nowrap">{value}</span>
      <svg viewBox="0 0 8 14" className="h-[14px] w-2 shrink-0"><path d="M4 0l3.500 6h-7zM4 14L.5 8h7z" fill="#111" /></svg>
    </span>
  );
}

const Lights = ({ dot, gap }: { dot: string; gap: string }) => (
  <div className={`flex ${gap}`}>
    <span className={`rounded-full bg-[#ed6b60] ${dot}`} />
    <span className={`rounded-full bg-[#f5bf4f] ${dot}`} />
    <span className={`rounded-full bg-[#62c655] ${dot}`} />
  </div>
);

function Tile({ children }: { children: React.ReactNode }) {
  return (
    <div className="relative flex h-[188px] w-[328px] justify-center border-4 border-white bg-[#222]">{children}</div>
  );
}

const participants = [
  { name: "Fatma Ekim (me)", letter: "F", color: "bg-[#5a4038]" },
  { name: "Derek Kinzo (Host)", letter: "D", color: "bg-[#436829]" },
  { name: "kdolan", letter: "k", color: "bg-[#4bab99]" },
  { name: "Marcia", letter: "M", color: "bg-[#ecad40]", talking: true },
  { name: "Vikram", letter: "V", color: "bg-[#4a92c3]" },
];

const CloseX = () => (
  <svg viewBox="0 0 12 12" className="h-3 w-3 shrink-0"><path d="M1 1l10 10M11 1L1 11" stroke="#5c5d61" strokeWidth="1.800" /></svg>
);

function Browser() {
  return (
    <div className="relative flex h-full w-[1714px] flex-col bg-[#fdfdfe]">
      <div className="flex h-[55px] shrink-0 bg-[#e8e8ed]">
        <div className="mt-5 ml-[17px]"><Lights dot="h-4 w-4" gap="gap-[10px]" /></div>
        <div className="mt-[11px] ml-[32px] flex h-[44px] w-[298px] items-center">
          <span className="flex h-[22px] w-[22px] shrink-0 items-center justify-center rounded-[6px] bg-[#4a8cf5]">
            <svg viewBox="0 0 14 10" className="h-[9px] w-[13px]"><path d="M0 1.500h8a1.500 1.500 0 0 1 1.500 1.500v5.500h-8A1.500 1.500 0 0 1 0 7zM10.200 4L13.500 1.500v7L10.200 6z" fill="#fff" /></svg>
          </span>
          <span className="ml-[10px] w-[240px] text-[15.700px] whitespace-nowrap text-[#6a6b70]">Post Attendee - Zoom</span>
          <CloseX />
        </div>
        <div className="relative mt-[11px] flex h-[44px] w-[313px] items-center rounded-t-[13px] bg-white pl-[15px]">
          <span className="absolute bottom-0 -left-[10px] h-[10px] w-[10px] bg-[radial-gradient(circle_at_0_0,#e8e8ed_10px,white_10.5px)]" />
          <span className="absolute -right-[10px] bottom-0 h-[10px] w-[10px] bg-[radial-gradient(circle_at_100%_0,#e8e8ed_10px,white_10.5px)]" />
          <svg viewBox="0 0 20 20" className="h-[20px] w-[20px] shrink-0">
            <circle cx="10" cy="10" r="9.500" fill="#4b4e53" />
            <path d="M2.500 7.500c2 .5 3 2 5 2.300 1.500.2 2 1.200 1.200 2.400-.8 1-.2 2.600-.7 4.800C4.500 16.500 1.800 12 2.500 7.500zM8.500 2.300c2-.6 4.500 0 6 1.500-.5 1.500-2.200 1-2.700 2.200-.6 1.300.8 1.400 2 1.300 1.800-.1 2.700 1.200 3.600 1.700.3 3-1.400 5.700-3.400 7 .2-2-.2-3.600-1.500-4-1.600-.5-2.300-1.500-1.900-2.700.3-1-.8-1.300-2.200-1.300C7 8 7.300 6.800 8.400 6c1-.7.3-1.800.1-3.700z" fill="#fff" />
          </svg>
          <span className="ml-[11px] w-[240px] text-[15.600px] whitespace-nowrap text-[#6a6b70]">Imported Malaria Monitor</span>
          <CloseX />
        </div>
        <svg viewBox="0 0 18 18" className="mt-[24px] ml-[20px] h-[18px] w-[18px]"><path d="M9 0v18M0 9h18" stroke="#55565a" strokeWidth="2" /></svg>
      </div>

      <div className="flex h-[49px] shrink-0 items-center border-b-2 border-[#dcdce0] bg-white">
        <svg viewBox="0 0 18 18" className="ml-[19px] h-[18px] w-[18px]"><path d="M17.500 9H1.500M9 1.500L1.500 9 9 16.500" fill="none" stroke="#b4b5b9" strokeWidth="1.900" /></svg>
        <svg viewBox="0 0 18 18" className="ml-[25px] h-[18px] w-[18px]"><path d="M.5 9h16M9 1.500L16.500 9 9 16.500" fill="none" stroke="#b4b5b9" strokeWidth="1.900" /></svg>
        <svg viewBox="0 0 20 20" className="ml-[23px] h-[20px] w-[20px]"><path d="M17.300 12.500A8 8 0 1 1 15.600 4.300" fill="none" stroke="#b4b5b9" strokeWidth="1.900" /><path d="M18.500 1v7h-7z" fill="#b4b5b9" /></svg>
        <div className="ml-[19px] flex h-[36px] w-[1413px] items-center rounded-full bg-[#f0f1f5] pr-[13px] pl-[16px]">
          <svg viewBox="0 0 12 16" className="h-[16px] w-[12px]"><path d="M1 6.500h10a1 1 0 0 1 1 1V15a1 1 0 0 1-1 1H1a1 1 0 0 1-1-1V7.500a1 1 0 0 1 1-1z" fill="#56575b" /><path d="M3 7V4a3 3 0 0 1 6 0v3" fill="none" stroke="#56575b" strokeWidth="1.700" /></svg>
          <span className="ml-[15px] text-[18.320px] whitespace-nowrap text-[#77787d]"><span className="text-[#55565b]">https:</span>//<span className="text-[#2e2f33]">imported-malaria-monitor.herokuapp.com</span>/map</span>
          <svg viewBox="0 0 20 20" className="ml-auto h-[20px] w-[20px]"><path d="M10 1.800l2.400 5.600 6 .5-4.600 4 1.400 5.900L10 14.700l-5.200 3.100 1.400-5.900-4.600-4 6-.5z" fill="none" stroke="#55565a" strokeWidth="1.700" /></svg>
        </div>
        <span className="ml-[20px] flex h-[24px] w-[20px] items-start text-[21px] leading-[20px] font-bold text-[#3c3d42] italic">m</span>
        <span className="ml-[18px] h-[21px] w-[2px] bg-[#dedee2]" />
        <svg viewBox="0 0 26 26" className="ml-[16px] h-[26px] w-[26px]"><circle cx="13" cy="13" r="13" fill="#dfdfe2" /><circle cx="13" cy="8.500" r="4.200" fill="#9fa0a4" /><ellipse cx="13" cy="18" rx="7.500" ry="4.200" fill="#9fa0a4" /></svg>
        <svg viewBox="0 0 4 18" className="ml-[26px] h-[18px] w-[4px]"><circle cx="2" cy="2.300" r="1.900" fill="#55565a" /><circle cx="2" cy="9" r="1.900" fill="#55565a" /><circle cx="2" cy="15.700" r="1.900" fill="#55565a" /></svg>
      </div>

      <div className="flex flex-col pl-[42px] font-['Liberation_Sans',Arial,sans-serif] text-[#47474a]">
        <h1 className="mt-[38px] h-[64px] text-[52.300px] leading-[64px] font-bold whitespace-nowrap text-[#46619b]">Imported Malaria Monitor</h1>
        <h2 className="mt-[31px] h-[40px] text-[31.350px] leading-[40px] whitespace-nowrap">Brazil By Municipality</h2>
        <div className="mt-[23px] flex h-[76px] text-[20.800px] leading-[25px] whitespace-nowrap">
          <div className="ml-[26px] w-[518px]">Total Cases Shown: 2944</div>
          <div className="flex h-[25px] w-[543px] items-center">Imported Cases:<Select value="Same municipality" className="mt-[4px] ml-[6px] w-[180px] tracking-[-0.3px]" /></div>
          <div>
            <div className="flex h-[25px] items-center">Year:<Select value="2019" className="mt-[4px] ml-[6px] w-[62px]" /></div>
            <div className="flex h-[25px] items-center">Month:<Select value="January" className="mt-[4px] ml-[5px] w-[100px]" /></div>
          </div>
        </div>
        <div className="relative mt-[2px] h-[784px] w-[1630px] overflow-hidden">
          <MapDrawing />
          <div className="absolute top-[13px] left-[13px] flex h-[85px] w-[44px] flex-col overflow-hidden rounded-[6px] border-2 border-[#aab1b4] bg-white">
            <span className="flex flex-1 items-center justify-center border-b border-[#c4c4c6] pt-[5px]"><svg viewBox="0 0 16 16" className="h-4 w-4"><path d="M8 0v16M0 8h16" stroke="#000" strokeWidth="2.800" /></svg></span>
            <span className="flex flex-1 items-center justify-center pt-[4px]"><svg viewBox="0 0 16 16" className="h-4 w-4"><path d="M0 8h16" stroke="#000" strokeWidth="2.800" /></svg></span>
          </div>
          <div className="absolute right-[13px] bottom-[34px] flex h-[110px] w-[115px] gap-[9px] rounded-[6px] bg-[#f5f6f9] pt-[7px] pl-[9px] text-[18.500px] shadow-[0_0_22px_rgba(0,0,0,0.22)]">
            <div className="flex w-[25px] flex-col">
              <span className="h-[24px] bg-[#fdf4e6]" />
              <span className="h-[24px] bg-[#f5dab0]" />
              <span className="h-[23px] bg-[#eaad8b]" />
              <span className="h-[24px] bg-[#d07166]" />
            </div>
            <div className="flex flex-col pt-[1px] leading-[23.700px] tracking-[-0.3px] text-[#5b5c5f]">
              <span>0–25</span><span>25–50</span><span>50–75</span><span>75–100</span>
            </div>
          </div>
          <div className="absolute right-0 bottom-0 flex h-[21px] w-[648px] items-center bg-white/75 pl-[7px] text-[14.350px] leading-none whitespace-pre text-[#333]">
            <span className="text-[#3a83b4]">Leaflet</span> | Imported Malaria, Map data © <span className="text-[#3a83b4]">OpenStreetMap</span> contributors, <span className="text-[#3a83b4]">CC-BY-SA</span>, Imagery © <span className="text-[#3a83b4]">Mapbox</span>
          </div>
        </div>
      </div>

      <svg viewBox="0 0 32 32" className="absolute top-[1191px] left-[1690px] h-8 w-8"><circle cx="16" cy="16" r="8" fill="#999" fillOpacity="0.55" stroke="#8a8a8a" strokeWidth="1.500" /><path d="M16 0v32M0 16h32" stroke="#333" strokeWidth="2" /><path d="M24.500 16H32" stroke="#777" strokeWidth="2" /></svg>
      <div className="absolute top-[1210px] left-[1715px] text-[12px] leading-[12px] text-[#5a5a5a]">1,306<br />918</div>
    </div>
  );
}

export default function App() {
  return (
    <div className="flex h-[1508px] w-[2870px] flex-col overflow-hidden bg-black font-[Inter,sans-serif]">
      <header className="relative flex h-[40px] shrink-0 items-start border-b-2 border-[#a0a0a0] bg-linear-to-b from-[#dddddd] to-[#c7c7c7] pt-[6px] pl-[8px]">
        <Lights dot="h-6 w-6 border border-black/10" gap="gap-4" />
        <span className="absolute top-[3px] left-[1397px] text-[25px] leading-[32px] text-[#474747]">Zoom</span>
      </header>

      <div className="flex min-h-0 flex-1">
        <main className="flex w-[2232px] flex-col">
          <div className="flex h-[220px] shrink-0 bg-[#26272b] pt-4 pl-[296px] text-[39px] tracking-[-1px] text-white">
            <Tile><span className="mr-[2px] flex h-[178px] w-[178px] items-center justify-center bg-[#5a4038] text-[93px]">F</span></Tile>
            <Tile><span className="mr-[2px] flex h-[178px] w-[178px] items-center justify-center bg-[#436829] text-[93px]">D</span></Tile>
            <Tile><span className="self-center pr-[2px]">Marcia</span></Tile>
            <Tile>
              <span className="absolute -inset-[5px] z-10 bg-[linear-gradient(to_bottom,#d1dd7e_5%,#9bdf3d_50%,#66b52f_51%,#9bd246_70%,#e4ec80_88%,#fffb96_97%)] p-[5px]">
                <span className="flex h-full w-full items-center justify-center bg-[#222] pr-[2px]">Vikram</span>
              </span>
            </Tile>
            <Tile><span className="self-center pr-[2px]">kdolan</span></Tile>
          </div>
          <div className="min-h-0 flex-1 pl-[255px]"><Browser /></div>
        </main>

        <aside className="flex w-[638px] flex-col bg-[#fefefe] text-[25.700px] text-[#464648]">
          <div className="relative flex h-[88px] items-center justify-center pt-[3px] pl-[17px]">
            <svg viewBox="0 0 18 12" className="absolute top-[39px] left-[47px] h-3 w-[18px]"><path d="M2 2l7 7 7-7" fill="none" stroke="#6f6f71" strokeWidth="3.200" /></svg>
            <span className="leading-none">Participants (5)</span>
          </div>
          <ul className="flex-1">
            {participants.map((p) => (
              <li key={p.name} className="flex h-[84px] items-center pr-[24px] pl-[58px]">
                <span className={`flex h-[52px] w-[52px] items-center justify-center rounded-full text-[26px] text-white ${p.color}`}>{p.letter}</span>
                <span className="ml-[18px] flex-1 pb-[2px]">{p.name}</span>
                <MicIcon active={p.talking} />
                <span className="ml-6"><CameraOffIcon /></span>
              </li>
            ))}
          </ul>
          <footer className="flex h-[94px] shrink-0 border-t-2 border-[#eeeef4] pt-[22px] text-[23.700px] text-[#5a5b6f]">
            <button className="ml-[126px] h-[53px] w-[120px] rounded-[8px] border-b-2 border-[#dfdfe7] bg-[#f1f0f6] pt-[5px] whitespace-nowrap">Mute Me</button>
            <button className="ml-[124px] h-[53px] w-[144px] rounded-[8px] border-b-2 border-[#dfdfe7] bg-[#f1f0f6] pt-[5px] whitespace-nowrap">Raise Hand</button>
          </footer>
        </aside>
      </div>
    </div>
  );
}
